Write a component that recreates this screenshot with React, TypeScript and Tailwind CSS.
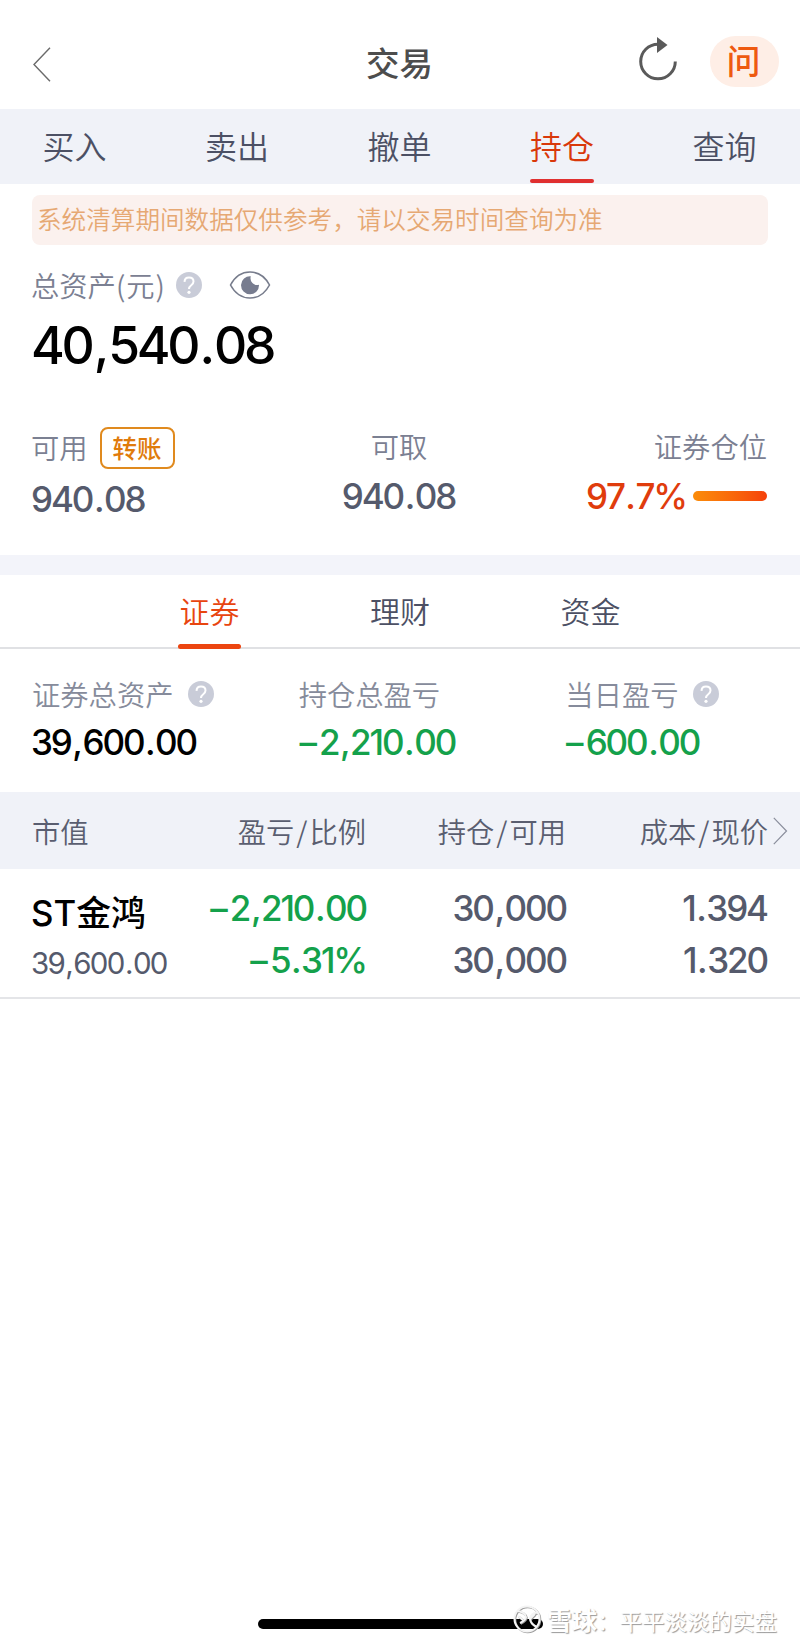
import clsx from "clsx";

const navTabs = ["买入", "卖出", "撤单", "持仓", "查询"];
const assetTabs = ["证券", "理财", "资金"];

const summary = [
  { label: "证券总资产", value: "39,600.00", help: true, color: "text-black" },
  { label: "持仓总盈亏", value: "–2,210.00", help: false, color: "text-[#14a14b]" },
  { label: "当日盈亏", value: "–600.00", help: true, color: "text-[#14a14b]" },
];

const columns = ["盈亏/比例", "持仓/可用", "成本/现价"];

// digits are set tight, punctuation gets its own room
function Num({ value, className }: { value: string; className?: string }) {
  return (
    <div
      className={clsx(
        "font-['Inter',sans-serif] tracking-[-0.06em] whitespace-nowrap [font-kerning:none]",
        className
      )}
    >
      {value.split(/([.,–])/).map((part, i) => (
        <span
          key={i}
          className={clsx(
            (part === "." || part === ",") && "mx-[0.045em]",
            part === "–" && "mr-[0.12em] ml-[0.05em]"
          )}
        >
          {part}
        </span>
      ))}
    </div>
  );
}

function HelpIcon() {
  return (
    <svg className="h-[26px] w-[26px] shrink-0" viewBox="0 0 26 26" fill="none">
      <circle cx="13" cy="13" r="13" fill="#c9ccd8" />
      <path
        d="M8.500 9.900C8.600 7.200 10.500 5.500 13 5.500c2.600 0 4.500 1.600 4.500 4 0 1.700-.9 2.600-2.300 3.700-1.500 1.100-2.200 1.900-2.200 3.900"
        stroke="#fff"
        strokeWidth="2"
      />
      <circle cx="13" cy="20.300" r="1.600" fill="#fff" />
    </svg>
  );
}

function EyeIcon() {
  return (
    <svg className="h-[28px] w-[42px]" viewBox="0 0 42 28" fill="none">
      <path
        d="M1.500 14C6 5.500 13 1 21 1s15 4.500 19.500 13C36 22.500 29 27 21 27S6 22.500 1.500 14Z"
        stroke="#777c8c"
        strokeWidth="1.6"
      />
      <path d="M21.800 5.300a6.800 6.800 0 0 0 8.200 8.500A9 9 0 1 1 21.800 5.300Z" fill="#777c8f" />
    </svg>
  );
}

function Header() {
  return (
    <header className="flex h-[109px] items-start justify-between pr-[21px] pl-[33px]">
      <div className="flex w-[165px]">
        <svg className="mt-[47px] h-[35px] w-[18px]" viewBox="0 0 18 35" fill="none">
          <path d="M17 .8 1 17.500 17 34.200" stroke="#6b6b6b" strokeWidth="1.4" />
        </svg>
      </div>
      <h1 className="mt-[37px] text-[33.500px] leading-[49px] font-medium text-[#4d4d4d]">交易</h1>
      <div className="mt-[36px] flex w-[178px] items-start justify-end gap-[33px]">
        <svg className="h-[46px] w-[40px]" viewBox="0 0 40 46" fill="none">
          <path d="M38.300 25.500A17.300 17.300 0 1 1 21 8.200" stroke="#5a5a5a" strokeWidth="3" />
          <path d="M20 1 30.500 9 20 17Z" fill="#5a5a5a" />
        </svg>
        <button className="h-[51px] w-[69px] rounded-full bg-[#feeee6] pr-[2px] pb-1 text-[34px] leading-[47px] font-medium text-[#ee5a10]">
          问
        </button>
      </div>
    </header>
  );
}

function Nav() {
  return (
    <nav className="flex h-[75px] justify-between bg-[#f0f2f8] pr-[43.500px] pl-[42.500px]">
      {navTabs.map((tab) => (
        <button
          key={tab}
          className={clsx(
            "flex w-16 flex-col justify-between pt-3 pb-px text-[32px] leading-[48px] whitespace-nowrap",
            tab === "持仓" ? "text-[#d9380a]" : "text-[#4c5064]"
          )}
        >
          {tab}
          {tab === "持仓" && <span className="h-1 w-full rounded-full bg-[#e03030]" />}
        </button>
      ))}
    </nav>
  );
}

function AssetCard() {
  return (
    <section className="px-8 pt-[11px]">
      <div className="h-[50px] rounded-lg bg-[#fbf1ee] pl-[5px] text-[24.600px] leading-[47px] text-[#e6a873]">
        系统清算期间数据仅供参考，请以交易时间查询为准
      </div>

      <div className="mt-[19px] flex h-[42px] items-center text-[28.300px] text-[#7b8092]">
        <span className="-ml-px leading-[42px]">
          总资产(<span className="mx-px">元</span>)
        </span>
        <span className="mr-[27px] ml-[11px]">
          <HelpIcon />
        </span>
        <EyeIcon />
      </div>
      <Num
        value="40,540.08"
        className="mt-[9px] -ml-px h-[61px] text-[51.500px] leading-[60px] font-medium tracking-[-0.065em] text-black"
      />

      <div className="mt-[49px] grid grid-cols-3 text-[35px] font-medium text-[#555a6c]">
        <div>
          <div className="flex h-[46px] items-start gap-[12px] pt-[2px]">
            <span className="-ml-px text-[28.300px] leading-[40px] font-[350] text-[#7b8092]">可用</span>
            <button className="h-[42px] w-[75px] rounded-lg border-2 border-[#e08a1e] text-[24.500px] leading-[36px] text-[#e07b0c]">
              转账
            </button>
          </div>
          <Num value="940.08" className="-ml-px h-[55px] pt-[2px] leading-[52px]" />
        </div>
        <div className="text-center">
          <div className="h-[45px] pr-[2px] text-[28.300px] leading-[42px] font-[350] text-[#7b8092]">可取</div>
          <Num value="940.08" className="pr-[3px] leading-[53px]" />
        </div>
        <div className="pr-px text-right">
          <div className="h-[45px] text-[28.300px] leading-[42px] font-[350] text-[#7b8092]">证券仓位</div>
          <div className="flex h-[53px] items-center justify-end gap-[7px] text-[#e03c0c]">
            <Num value="97.7%" className="tracking-[-0.05em]" />
            <span className="mb-px h-[10px] w-[74px] rounded-full bg-linear-to-r from-[#fb8c0a] to-[#f5400a]" />
          </div>
        </div>
      </div>
    </section>
  );
}

function AssetTabs() {
  return (
    <div className="flex h-[74px] justify-center gap-[127px] border-b-2 border-[#e0e1e4]">
      {assetTabs.map((tab) => (
        <button
          key={tab}
          className={clsx(
            "flex w-[63.500px] flex-col justify-between pt-3 text-center text-[30px] leading-[46px] whitespace-nowrap",
            tab === "证券" ? "text-[#e8450f]" : "text-[#4c5064]"
          )}
        >
          <span className="w-full">{tab}</span>
          {tab === "证券" && <span className="-mb-[2px] h-[5px] w-full rounded-full bg-[#ec4510]" />}
        </button>
      ))}
    </div>
  );
}

function Summary() {
  return (
    <section className="grid h-[143px] grid-cols-3 pt-[23px]">
      {summary.map((item) => (
        <div key={item.label} className="pl-8">
          <div className="flex h-[43px] items-center gap-[14px] text-[28.300px] leading-[42px] text-[#868b9b]">
            {item.label}
            {item.help && <HelpIcon />}
          </div>
          <Num
            value={item.value}
            className={clsx("-ml-px text-[35px] leading-[54px] font-medium", item.color)}
          />
        </div>
      ))}
    </section>
  );
}

function Holdings() {
  return (
    <section>
      <div className="flex h-[77px] items-center bg-[#f0f2f8] pl-8 text-[28.300px] text-[#5a5e70]">
        <div className="grid w-[736px] grid-cols-[134px_200px_200px_202px] text-right leading-[42px]">
          <span className="text-left">市值</span>
          {columns.map((name) => (
            <span key={name}>
              {name.split("/")[0]}
              <span className="mx-[2px]">/</span>
              {name.split("/")[1]}
            </span>
          ))}
        </div>
        <svg className="ml-[5px] h-[28px] w-[15px]" viewBox="0 0 15 28" fill="none">
          <path d="M.8.8 13.500 14 .8 27.200" stroke="#8a8e9c" strokeWidth="1.2" />
        </svg>
      </div>
      <div className="grid h-[130px] grid-cols-[134px_200px_200px_201px] border-b-2 border-[#e4e5e8] pt-[14px] pl-8 text-right text-[35px] leading-[51.500px] font-medium text-[#555a6c]">
        <div className="-ml-px text-left whitespace-nowrap">
          <div className="mt-[5px] h-[52px] font-['Inter','Noto_Sans_CJK_SC',sans-serif] text-[34.800px] leading-[51px] text-black">
            ST金鸿
          </div>
          <Num value="39,600.00" className="text-[29.500px] leading-[46px] font-normal" />
        </div>
        <div className="text-[#14a14b]">
          <Num value="–2,210.00" />
          <Num value="–5.31%" />
        </div>
        <div>
          <Num value="30,000" />
          <Num value="30,000" />
        </div>
        <div>
          <Num value="1.394" />
          <Num value="1.320" />
        </div>
      </div>
    </section>
  );
}

function Footer() {
  return (
    <footer className="relative mt-auto h-[46px] pt-[19px]">
      <div className="ml-[258px] h-[10px] w-[285px] rounded-full bg-black" />
      <div className="absolute top-[2px] left-[513px] flex items-center gap-[5px] text-[22.500px] leading-[34px] text-white [text-shadow:1px_1px_1px_#999]">
        <svg className="h-[29px] w-[29px]" viewBox="0 0 29 29" fill="none">
          <g stroke="#999" strokeWidth="2" transform="translate(.8 .8)">
            <circle cx="14" cy="14" r="12.500" />
            <path d="M4 6c4 0 9 3 9 6 0 2-2 4-6 6M5 11l5 4M25 8c-5-1-8 3-8 6s3 6 7 8M22 9l-5 5" />
          </g>
          <g stroke="#f4f4f4" strokeWidth="2">
            <circle cx="14" cy="14" r="12.500" />
            <path d="M4 6c4 0 9 3 9 6 0 2-2 4-6 6M5 11l5 4M25 8c-5-1-8 3-8 6s3 6 7 8M22 9l-5 5" />
          </g>
        </svg>
        <span className="font-normal whitespace-nowrap">
          <span className="text-[25px] font-bold">雪球</span>：平平淡淡的实盘
        </span>
      </div>
    </footer>
  );
}

export default function App() {
  return (
    <div className="flex h-[1646px] w-[800px] flex-col overflow-hidden bg-white font-['Noto_Sans_CJK_SC',sans-serif] font-[350]">
      <Header />
      <Nav />
      <AssetCard />
      <div className="mt-[29px] h-5 bg-[#f3f4fa]" />
      <AssetTabs />
      <Summary />
      <Holdings />
      <Footer />
    </div>
  );
}
